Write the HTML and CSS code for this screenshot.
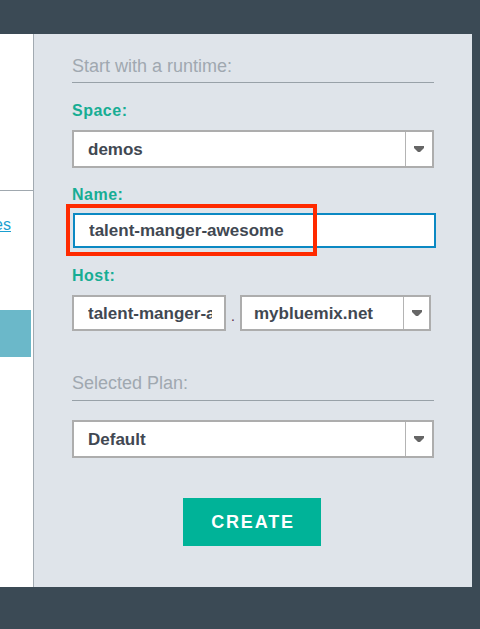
FILE: index.html
```html
<!DOCTYPE html>
<html>
<head>
<meta charset="utf-8">
<link rel="stylesheet" href="styles.css">
</head>
<body>
<div class="page">
  <div class="main">
    <aside class="side">
      <div class="side-rule"></div>
      <div class="side-link"><a href="#">Boilerplates</a></div>
      <div class="side-block"></div>
    </aside>
    <section class="panel">
      <div class="section-title first">Start with a runtime:</div>

      <div class="label l-space">Space:</div>
      <div class="select">
        <span class="select-text">demos</span>
        <span class="select-arrow"><svg width="10" height="7" viewBox="0 0 10 7"><path d="M0 0H10V2L6 6H4L0 2Z" fill="#666"/></svg></span>
      </div>

      <div class="label l-name">Name:</div>
      <div class="name-wrap">
        <div class="input focused"><span class="input-text">talent-manger-awesome</span></div>
        <div class="highlight"></div>
      </div>

      <div class="label l-host">Host:</div>
      <div class="host-row">
        <div class="input host-input"><span class="input-text">talent-manger-awesome</span></div>
        <span class="dot">.</span>
        <div class="select host-select">
          <span class="select-text domain">mybluemix.net</span>
          <span class="select-arrow"><svg width="10" height="7" viewBox="0 0 10 7"><path d="M0 0H10V2L6 6H4L0 2Z" fill="#666"/></svg></span>
        </div>
      </div>

      <div class="section-title plan">Selected Plan:</div>
      <div class="select plan-select">
        <span class="select-text">Default</span>
        <span class="select-arrow"><svg width="10" height="7" viewBox="0 0 10 7"><path d="M0 0H10V2L6 6H4L0 2Z" fill="#666"/></svg></span>
      </div>

      <div class="actions"><button class="create">CREATE</button></div>
    </section>
  </div>
</div>
</body>
</html>
```

FILE: styles.css
```css
html, body {
  margin: 0;
  padding: 0;
}
body {
  background: #3b4a55;
  font-family: "Liberation Sans", Arial, sans-serif;
  width: 480px;
  height: 629px;
  overflow: hidden;
}
.page {
  padding: 34px 8px 0 0;
  height: 629px;
  box-sizing: border-box;
}
.main {
  display: flex;
  height: 553px;
}
.side {
  width: 33px;
  background: #ffffff;
  border-right: 1px solid #a2aab1;
  overflow: hidden;
  padding-top: 156px;
  box-sizing: content-box;
}
.side-rule {
  border-top: 1px solid #a0a8af;
}
.side-link {
  display: flex;
  justify-content: flex-end;
  margin-top: 24px;
  padding-right: 22px;
  line-height: 20px;
  font-size: 16px;
  white-space: nowrap;
}
.side-link a {
  color: #1a9fd0;
  text-decoration: underline;
  flex: none;
}
.side-block {
  margin-top: 75px;
  width: 31px;
  height: 47px;
  background: #6bb8c9;
}
.panel {
  flex: 1;
  background: #dfe4ea;
  padding: 0 38px;
}
.section-title {
  font-size: 18px;
  line-height: 20px;
  color: #a0a8b0;
  border-bottom: 1px solid #98a1a8;
  padding-bottom: 6px;
}
.section-title.first {
  margin-top: 22px;
}
.section-title.plan {
  margin-top: 42px;
  padding-bottom: 7px;
}
.label {
  font-size: 16px;
  font-weight: 700;
  letter-spacing: 0.5px;
  line-height: 18px;
  color: #17ad94;
}
.l-space { margin-top: 19px; }
.l-name { margin-top: 18px; }
.l-host { margin-top: 19px; }
.select {
  display: flex;
  align-items: center;
  height: 38px;
  box-sizing: border-box;
  border: 2px solid #adadad;
  background: #ffffff;
  margin-top: 10px;
}
.select-text {
  flex: 1;
  padding-left: 14px;
  padding-top: 1px;
  font-size: 17px;
  font-weight: 700;
  color: #414852;
  white-space: nowrap;
  overflow: hidden;
}
.select-arrow {
  width: 26px;
  align-self: stretch;
  border-left: 1px solid #b4b4b4;
  display: flex;
  align-items: center;
  justify-content: center;
}
.select-arrow svg {
  display: block;
  margin-top: 1px;
}
.name-wrap {
  position: relative;
  margin-top: 9px;
  margin-right: -2px;
}
.input {
  height: 35px;
  box-sizing: border-box;
  background: #ffffff;
  border: 2px solid #adadad;
  display: flex;
  align-items: center;
  padding: 1px 12px 0 14px;
  font-size: 17px;
  font-weight: 700;
  color: #414852;
  overflow: hidden;
}
.input-text {
  flex: 1;
  min-width: 0;
  white-space: nowrap;
  overflow: hidden;
}
.input.focused {
  border-color: #0b89c3;
  margin-left: 1px;
}
.highlight {
  position: absolute;
  left: -6px;
  top: -9px;
  width: 251px;
  height: 52px;
  box-sizing: border-box;
  border: 4px solid #ff2a00;
}
.host-row {
  display: flex;
  align-items: stretch;
  margin-top: 10px;
  height: 36px;
}
.host-input {
  width: 154px;
  height: 36px;
  flex: none;
}
.dot {
  width: 14px;
  flex: none;
  align-self: flex-end;
  text-align: center;
  font-size: 14px;
  line-height: 14px;
  margin-bottom: 8px;
  color: #5a2a45;
}
.host-select {
  margin-top: 0;
  height: 36px;
  width: 191px;
  flex: none;
}
.host-select .select-text {
  padding-left: 12px;
}
.host-select .select-arrow {
  width: 25px;
}
.plan-select {
  margin-top: 19px;
}
.actions {
  display: flex;
  justify-content: center;
  margin-top: 40px;
}
.create {
  width: 138px;
  height: 48px;
  border: none;
  background: #00b398;
  color: #ffffff;
  font-family: "Liberation Sans", Arial, sans-serif;
  font-size: 18px;
  font-weight: 700;
  letter-spacing: 1.8px;
  padding: 0 0 0 2px;
  margin-left: -2px;
}
```
